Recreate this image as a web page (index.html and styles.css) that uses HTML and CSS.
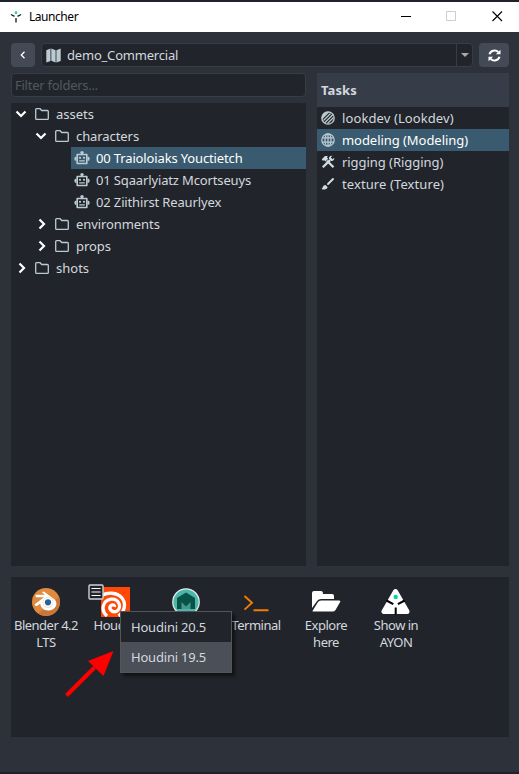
FILE: index.html
```html
<!DOCTYPE html>
<html lang="en">
<head>
<meta charset="utf-8">
<title>Launcher</title>
<link rel="stylesheet" href="styles.css">
</head>
<body>
<svg class="defs" aria-hidden="true">
  <symbol id="folder" viewBox="0 0 14 12"><path d="M.7 10.400V1.600q0-.9.9-.9h3.500l1.600 1.800h5.700q.9 0 .9.900v7q0 .9-.9.900H1.600q-.9 0-.9-.9z" fill="none" stroke="#bccbd3" stroke-width="1.300"/></symbol>
  <symbol id="robot" viewBox="0 0 16 16"><path d="M3.200 4.500h9.600v9H3.200z" fill="none" stroke="#bccbd3" stroke-width="1.600" stroke-linejoin="round"/><circle cx="8" cy="2.600" r="1.700" fill="#bccbd3"/><path d="M2.500 6.500a2.200 2.200 0 0 0 0 4.400zM13.500 6.500a2.200 2.200 0 0 1 0 4.400zM5.200 10.300h5.600v1.300H5.200z" fill="#bccbd3"/><circle cx="6" cy="7.800" r="1.100" fill="#bccbd3"/><circle cx="10" cy="7.800" r="1.100" fill="#bccbd3"/></symbol>
  <symbol id="down" viewBox="0 0 12 8"><path d="M1.500 1.500 6 6l4.500-4.500" fill="none" stroke="#fff" stroke-width="2.200"/></symbol>
  <symbol id="right" viewBox="0 0 8 12"><path d="M1.500 1.500 6 6l-4.500 4.500" fill="none" stroke="#fff" stroke-width="2.200"/></symbol>
</svg>
<div class="window">
  <header class="titlebar">
    <svg class="logo" width="12" height="12" viewBox="0 0 12 12"><path d="M1 3.500 4.500 5.400M11 3.500 7.500 5.400" stroke="#222" stroke-width="1.400"/><path d="M6 7v4.500" stroke="#555" stroke-width="1.800"/><circle cx="6" cy="1.700" r="1.400" fill="#1fd6a5"/></svg>
    <h1>Launcher</h1>
    <svg class="controls" width="102" height="12" viewBox="0 0 102 12"><path d="M0 5.500h10" stroke="#000"/><path d="M45.500 .5h9v9h-9z" fill="none" stroke="#ccc"/><path d="m91.500.5 9.500 9.500m0-9.500-9.500 9.500" stroke="#000" stroke-width="1.100"/></svg>
  </header>
  <main>
    <div class="toolbar">
      <button class="back" aria-label="Back"><svg width="6" height="8" viewBox="0 0 6 8"><path d="M4.500.8 1.300 4l3.200 3.200" fill="none" stroke="#fff" stroke-width="1.300"/></svg></button>
      <div class="combo">
        <svg width="15" height="15" viewBox="0 0 15 15" fill="#bccbd3"><path d="M.3 2.200 4.500.5v12.400L.3 14.600zM5.300.5l4.300 1.700v12.300l-4.300-1.700zM10.400 2.200 14.700.5v12.400l-4.300 1.700z"/></svg>
        <span>demo_Commercial</span>
        <i class="drop"><svg width="8" height="4" viewBox="0 0 8 4"><path d="M0 0h8L4 4z" fill="#aaa9a3"/></svg></i>
      </div>
      <button class="refresh" aria-label="Refresh"><svg width="13" height="13" viewBox="0 0 13 13"><path d="M1.500 5.300C2.500 1.500 7.500.2 10.300 3M11.500 7.700C10.500 11.500 5.500 12.800 2.700 10" fill="none" stroke="#fff" stroke-width="2"/><path d="M12.500.7v4.600H7.900zM.5 12.300V7.700h4.600z" fill="#fff"/></svg></button>
    </div>
    <div class="columns">
      <section class="folders">
        <div class="filter">Filter folders...</div>
        <div class="tree">
          <div class="node l0"><svg class="arrow d"><use href="#down"/></svg><svg class="fi"><use href="#folder"/></svg>assets</div>
          <div class="node l1"><svg class="arrow d"><use href="#down"/></svg><svg class="fi"><use href="#folder"/></svg>characters</div>
          <div class="node l2 selected"><svg class="ri"><use href="#robot"/></svg>00 Traioloiaks Youctietch</div>
          <div class="node l2"><svg class="ri"><use href="#robot"/></svg>01 Sqaarlyiatz Mcortseuys</div>
          <div class="node l2"><svg class="ri"><use href="#robot"/></svg>02 Ziithirst Reaurlyex</div>
          <div class="node l1"><svg class="arrow r"><use href="#right"/></svg><svg class="fi"><use href="#folder"/></svg>environments</div>
          <div class="node l1"><svg class="arrow r"><use href="#right"/></svg><svg class="fi"><use href="#folder"/></svg>props</div>
          <div class="node l0"><svg class="arrow r"><use href="#right"/></svg><svg class="fi"><use href="#folder"/></svg>shots</div>
        </div>
      </section>
      <section class="tasks">
        <h2>Tasks</h2>
        <div class="task wide"><svg viewBox="0 0 14 14"><circle cx="7" cy="7" r="6.200" fill="none" stroke="#bccbd3" stroke-width="1.300"/><path d="M2.500 9.500 9.500 2.500M3.500 12 12 3.500M6.500 12.500l6-6" stroke="#bccbd3" stroke-width="1.300"/><path d="M1 8.500C0 4 4 0 8.500 1z" fill="#bccbd3"/></svg>lookdev (Lookdev)</div>
        <div class="task selected"><svg viewBox="0 0 14 14" fill="none" stroke="#bccbd3" stroke-width="1.200"><circle cx="7" cy="7" r="6.200"/><ellipse cx="7" cy="7" rx="3" ry="6.200"/><path d="M7 1v12M1 4.800h12M1 9.200h12"/></svg>modeling (Modeling)</div>
        <div class="task"><svg viewBox="0 0 14 14"><path d="M1.800 12.300 9 5.100" stroke="#d3dce1" stroke-width="2.300"/><path d="m6 5.800 6.500 6.500" stroke="#d3dce1" stroke-width="2.300"/><path d="M.8 4.200 4 1h3L5.800 2.200l1.400 1.500-2.800 2.800L3 5 2 6zM8 3.800C7.500 2 9.300.3 11.300.8L9.800 2.400l1.800 1.800 1.600-1.500c.5 2-1.300 3.800-3.200 3.200z" fill="#d3dce1"/></svg>rigging (Rigging)</div>
        <div class="task wide"><svg viewBox="0 0 14 14"><path d="m12 2-5 5" stroke="#d3dce1" stroke-width="1.900" stroke-linecap="round"/><path d="M4.500 8 6.500 10c.2 2-2.700 3.300-6 2 1.700-.8.900-3.800 4-4z" fill="#d3dce1"/></svg>texture (Texture)</div>
      </section>
    </div>
    <section class="apps">
      <div class="app"><svg viewBox="0 0 30 30"><circle cx="15" cy="15" r="14" fill="#e08a3f"/><path d="M7 26.500 28 10a14 14 0 0 1-21 16.500z" fill="#c97737"/><path d="M3.500 17.500 13 10.200H5.200q-1.800-2 .5-2.500h8.200l-2.800-2.200q.8-1.500 2.500-.5l10 7.400c3.800 3.700 1.700 10-5.500 11-5.300.5-8.700-2.900-8.800-6.900L6 18.900q-2 .3-2.500-1.400z" fill="#fff"/><circle cx="17" cy="15.300" r="5.200" fill="#e9a064"/><circle cx="17" cy="15.300" r="5" fill="#fff"/><circle cx="17" cy="15.300" r="3.100" fill="#22639b"/></svg><span>Blender 4.2 LTS</span></div>
      <div class="app"><svg viewBox="0 0 30 30"><path d="M0 0h29v30H0z" fill="#ff4805"/><g fill="none" stroke="#fff" stroke-width="3.300"><path d="M0 9C6 5 16 5 21 11c4.500 5.500 2.500 14-3.500 17.800"/><path d="M6 29C-1 23 2 13.500 10 12.200c8-1 11.500 8.800 5.500 12-4.500 2.200-8.500-3-5.500-5.700 1.800-1.500 3.800-.2 3.400 1.400"/></g></svg><span>Houdini</span>
        <svg class="badge" width="17" height="17" viewBox="0 0 17 17"><rect x="1" y="1" width="14" height="14" rx="1" fill="#21252b" stroke="#cbd2d7" stroke-width="1.400"/><path d="M3.500 4.500h9M3.500 8h9M3.500 11.500h9" stroke="#fff" stroke-width="1.200"/></svg>
        <div class="menu"><div>Houdini 20.5</div><div class="hover">Houdini 19.5</div></div>
      </div>
      <div class="app"><svg viewBox="0 0 30 30"><circle cx="15" cy="15" r="13.200" fill="#4db5aa" stroke="#e2eded" stroke-width="1.300"/><path d="m6 11 9-5.500 9 5.500v11H6z" fill="#075447"/><path d="M10.500 22v-7l4.500 4.500 4.500-4.500v7z" fill="#43998f"/></svg><span></span></div>
      <div class="app"><svg viewBox="0 0 30 30" fill="none" stroke="#f57c00" stroke-width="1.900"><path d="m3.500 9 7.500 6.800-7.500 6.800M12.500 23.300h15"/></svg><span>Terminal</span></div>
      <div class="app"><svg viewBox="0 0 30 30" fill="#fff"><path d="M1 21V6q0-2 2-2h7q2 0 2 3h9q2 0 2 2v3H10q-2.500 0-4 2z"/><path d="M1.500 24 7 15q1-1.600 3-1.600h18q2 0 1 1.800L24.500 23q-1 1.600-3 1.600H3q-2 0-1.500-.6z"/></svg><span>Explore here</span></div>
      <div class="app"><svg viewBox="0 0 30 30"><path d="M14.500 4.500 3 24.500h23z" fill="#fff" stroke="#fff" stroke-width="5" stroke-linejoin="round"/><path d="m5.500 13.500 6.800 3.700m11.400-3.700-6.800 3.700M14.700 20.500v7" stroke="#000" stroke-width="2"/><circle cx="14.700" cy="10" r="2.200" fill="#00d69c"/></svg><span>Show in AYON</span></div>
      <svg class="pointer" width="50" height="50" viewBox="0 0 50 50"><path d="m1.500 44.500 28-28" stroke="#f00" stroke-width="4"/><path d="M48.500 0 38.500 25 23 10z" fill="#f00"/></svg>
    </section>
  </main>
</div>
</body>
</html>
```
FILE: styles.css
```css
* { box-sizing: border-box; }
body { margin: 0; background: #20222b; color: #d3d8de; font: 13px/22px "Noto Sans", sans-serif; }
h1, h2 { margin: 0; }
svg { display: block; flex: none; }
.defs { display: none; }
.window { display: flex; flex-direction: column; height: 774px; padding: 2px 0; }
.titlebar { display: flex; align-items: center; height: 30px; padding: 0 16px 0 10px; background: #fff; color: #000; }
.titlebar h1 { margin: 0 auto 0 7px; font-size: 12px; font-weight: 400; letter-spacing: -.45px; }
main { flex: 1; display: flex; flex-direction: column; padding: 11px 10px 35px 11px; background: #2c313a; }
.toolbar { display: flex; gap: 6px; height: 24px; }
button { display: grid; place-items: center; padding: 0; border: 0; border-radius: 4px; background: #434a56; }
.back { width: 24px; }
.refresh { width: 30px; }
.combo { flex: 1; display: flex; align-items: center; gap: 6px; padding-left: 4px; border: 1px solid #373d48; border-radius: 4px; background: #21252b; letter-spacing: -.2px; }
.drop { display: grid; place-items: center; width: 16px; height: 100%; margin-left: auto; border-left: 1px solid #373d48; }
.columns { flex: 1; display: grid; grid-template-columns: 295px 192px; gap: 11px; margin: 6px 0 11px; }
.folders { display: flex; flex-direction: column; gap: 6px; }
.filter { height: 24px; padding-left: 3px; border: 1px solid #373d48; border-radius: 4px; background: #21252b; color: #53585e; letter-spacing: -.25px; }
.tree { flex: 1; background: #21252b; }
.tasks { background: #21252b; }
.node { display: flex; align-items: center; height: 22px; }
.l0 { padding-left: 4px; }
.l1 { padding-left: 24px; letter-spacing: -.08px; }
.l2 { margin-left: 60px; padding-left: 3px; letter-spacing: -.14px; }
.selected { background: #3a5b6f; color: #fff; }
.arrow.d { width: 12px; height: 8px; margin-right: 8px; }
.arrow.r { width: 8px; height: 12px; margin: 0 9px 0 3px; }
.fi { width: 14px; height: 12px; margin-right: 7px; }
.ri { width: 16px; height: 16px; margin-right: 6px; }
.tasks h2 { height: 34px; padding-left: 4px; background: #373d48; font-size: 13px; line-height: 34px; letter-spacing: .1px; }
.task { display: flex; align-items: center; gap: 7px; height: 22px; padding-left: 4px; letter-spacing: -.05px; }
.task.wide { letter-spacing: .1px; }
.task svg { width: 14px; height: 14px; }
.apps { position: relative; display: flex; align-items: flex-start; height: 160px; background: #21252b; }
.app { position: relative; display: flex; flex-direction: column; align-items: center; width: 70px; padding-top: 10px; text-align: center; line-height: 17px; letter-spacing: -.5px; }
.app > svg { width: 30px; height: 30px; }
.app > span { width: 68px; }
.app > .badge { position: absolute; left: 7px; top: 7px; width: 17px; height: 17px; }
.menu { position: absolute; z-index: 2; left: 39px; top: 34px; width: 112px; height: 62px; border: 1px solid #555658; background: #21252b; box-shadow: 3px 3px 3px #0008; text-align: left; line-height: 30px; letter-spacing: -.2px; }
.menu div { height: 30px; padding-left: 10px; }
.menu .hover { background: #4b4f57; }
.pointer { position: absolute; left: 54px; top: 74px; }
```
